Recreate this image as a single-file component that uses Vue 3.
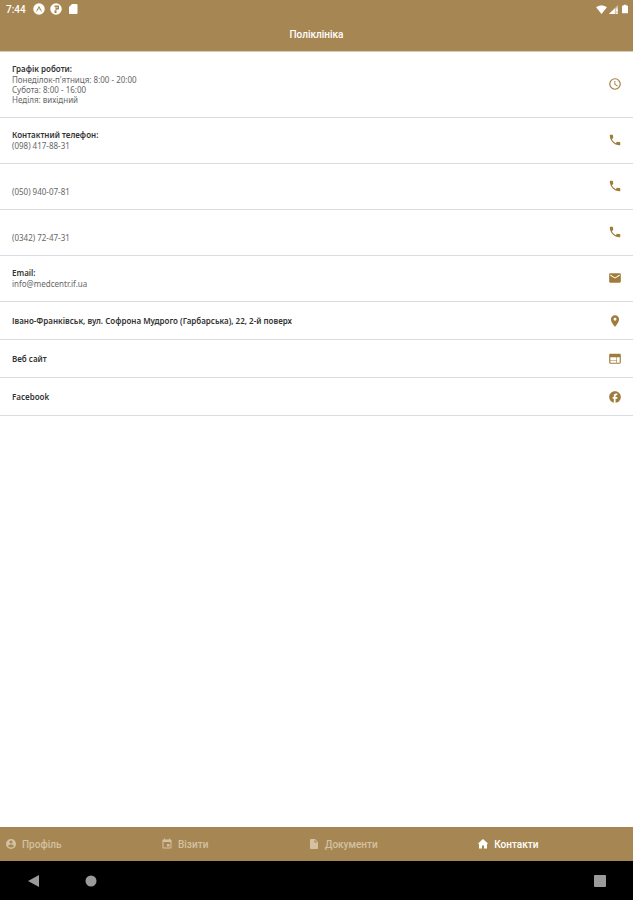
<script setup>
import { ref } from 'vue'

// 24x24 glyphs
const icons = {
  clock: 'M12 2a10 10 0 1 0 0 20 10 10 0 0 0 0-20zm0 18a8 8 0 1 1 0-16 8 8 0 0 1 0 16zm.5-13H11v6l5.2 3.2.8-1.3-4.500-2.700z',
  phone: 'M6.620 10.790c1.440 2.830 3.760 5.140 6.590 6.590l2.200-2.200c.27-.27.67-.36 1.020-.24 1.120.37 2.330.57 3.570.57.55 0 1 .45 1 1V20c0 .55-.45 1-1 1C10.610 21 3 13.390 3 4c0-.55.45-1 1-1h3.500c.55 0 1 .45 1 1 0 1.250.2 2.450.57 3.570.11.35.03.74-.25 1.020z',
  mail: 'M20 4H4c-1.100 0-2 .9-2 2v12c0 1.100.9 2 2 2h16c1.100 0 2-.9 2-2V6c0-1.100-.9-2-2-2zm0 4-8 5-8-5V6l8 5 8-5z',
  pin: 'M12 2C8.130 2 5 5.130 5 9c0 5.250 7 13 7 13s7-7.750 7-13c0-3.870-3.130-7-7-7zm0 9.500a2.500 2.500 0 1 1 0-5 2.500 2.500 0 0 1 0 5z',
  web: 'M20 3H4c-1.100 0-2 .9-2 2v13c0 1.100.9 2 2 2h16c1.100 0 2-.9 2-2V5c0-1.100-.9-2-2-2zM14.500 18.500H4v-4h10.500zm0-5H4V9h10.500zm5.500 5h-4.500V9H20z',
  facebook: 'M22 12c0-5.520-4.480-10-10-10S2 6.480 2 12c0 4.840 3.440 8.870 8 9.800V15H8v-3h2V9.500C10 7.570 11.570 6 13.500 6H16v3h-2c-.55 0-1 .45-1 1v2h3v3h-3v6.950c5.050-.5 9-4.760 9-9.950z',
  user: 'M12 2a10 10 0 1 0 0 20 10 10 0 0 0 0-20zm0 3a3 3 0 1 1 0 6 3 3 0 0 1 0-6zm0 14.200a7.200 7.200 0 0 1-6-3.220c.03-1.990 4-3.080 6-3.080s5.970 1.090 6 3.080a7.200 7.200 0 0 1-6 3.220z',
  calendar: 'M17 12h-5v5h5zM16 1v2H8V1H6v2H5c-1.110 0-2 .9-2 2v14c0 1.100.89 2 2 2h14c1.100 0 2-.9 2-2V5c0-1.100-.9-2-2-2h-1V1zm3 18H5V8h14z',
  file: 'M6 2c-1.100 0-2 .9-2 2v16c0 1.100.89 2 2 2h12c1.100 0 2-.9 2-2V8l-6-6zm7 7V3.500L18.500 9z',
  home: 'M12 2 1.500 11.500H4V21h6v-6h4v6h6v-9.500h2.500z',
}

const contacts = [
  {
    title: 'Графік роботи:',
    lines: ["Понеділок-п'ятниця: 8:00 - 20:00", 'Субота: 8:00 - 16:00', 'Неділя: вихідний'],
    icon: 'clock',
  },
  { title: 'Контактний телефон:', lines: ['(098) 417-88-31'], icon: 'phone', href: 'tel:0984178831' },
  { title: '', lines: ['(050) 940-07-81'], icon: 'phone', href: 'tel:0509400781' },
  { title: '', lines: ['(0342) 72-47-31'], icon: 'phone', href: 'tel:0342724731' },
  { title: 'Email:', lines: ['info@medcentr.if.ua'], icon: 'mail', href: 'mailto:info@medcentr.if.ua' },
  {
    title: 'Івано-Франківськ, вул. Софрона Мудрого (Гарбарська), 22, 2-й поверх',
    lines: [],
    icon: 'pin',
    href: '#map',
  },
  { title: 'Веб сайт', lines: [], icon: 'web', href: '#site' },
  { title: 'Facebook', lines: [], icon: 'facebook', href: '#facebook' },
]

const tabs = [
  { id: 'profile', label: 'Профіль', icon: 'user' },
  { id: 'visits', label: 'Візити', icon: 'calendar' },
  { id: 'docs', label: 'Документи', icon: 'file' },
  { id: 'contacts', label: 'Контакти', icon: 'home' },
]

const activeTab = ref('contacts')
</script>

<template>
  <div class="screen">
    <header class="header">
      <div class="status">
        <span class="status-time">7:44</span>
        <svg class="status-icon" viewBox="0 0 24 24" aria-hidden="true">
          <circle cx="12" cy="12" r="11.500" fill="#fff" />
          <path d="M7 17 12 7l5 10M9.500 13.500 12 11l2.500 2.500" fill="none" stroke="#a68753" stroke-width="1.800" />
        </svg>
        <svg class="status-icon" viewBox="0 0 24 24" aria-hidden="true">
          <circle cx="12" cy="12" r="11.500" fill="#fff" />
          <path d="M9 5h9v8h-5v7H9v-5h2V8H9z" fill="#a68753" />
          <path d="M13 8h2v2h-2z" fill="#fff" />
        </svg>
        <svg class="status-icon" viewBox="0 0 24 24" aria-hidden="true">
          <path d="M10 2h9a2 2 0 0 1 2 2v16a2 2 0 0 1-2 2H6a2 2 0 0 1-2-2V8z" fill="#fff" />
        </svg>
        <div class="status-right">
          <svg class="status-wifi" viewBox="0 0 24 20" aria-hidden="true">
            <path d="M12 20 0 5C7 0 17 0 24 5z" fill="#fff" />
          </svg>
          <svg class="status-signal" viewBox="0 0 20 20" aria-hidden="true">
            <path d="M0 20 20 0v20z" fill="#fff" opacity=".5" />
            <path d="M0 20 13 7v13zM16 8h3v7h-3zM16 17h3v3h-3z" fill="#fff" />
          </svg>
          <svg class="status-battery" viewBox="0 0 14 20" aria-hidden="true">
            <path d="M4 0h6v2h2a2 2 0 0 1 2 2v14a2 2 0 0 1-2 2H2a2 2 0 0 1-2-2V4a2 2 0 0 1 2-2h2z" fill="#fff" />
          </svg>
        </div>
      </div>
      <h1 class="title">Поліклініка</h1>
    </header>

    <main class="list">
      <component
        :is="c.href ? 'a' : 'div'"
        v-for="(c, i) in contacts"
        :key="i"
        :href="c.href"
        class="row"
        :class="{ 'row--single': !c.lines.length }"
      >
        <div class="row-text">
          <div class="row-title">{{ c.title }}</div>
          <div v-for="line in c.lines" :key="line" class="row-line">{{ line }}</div>
        </div>
        <svg class="row-icon" viewBox="0 0 24 24" aria-hidden="true">
          <path :d="icons[c.icon]" fill-rule="evenodd" />
        </svg>
      </component>
    </main>

    <nav class="tabs">
      <button
        v-for="t in tabs"
        :key="t.id"
        type="button"
        class="tab"
        :class="{ 'tab--active': activeTab === t.id }"
        :aria-current="activeTab === t.id ? 'page' : undefined"
        @click="activeTab = t.id"
      >
        <svg class="tab-icon" viewBox="0 0 24 24" aria-hidden="true">
          <path :d="icons[t.icon]" fill-rule="evenodd" />
        </svg>
        {{ t.label }}
      </button>
    </nav>

    <div class="system">
      <button type="button" class="sys-btn" aria-label="Назад">
        <svg viewBox="0 0 12 12" aria-hidden="true"><path d="M0 6 11 0v12z" /></svg>
      </button>
      <button type="button" class="sys-btn" aria-label="Додому">
        <svg viewBox="0 0 12 12" aria-hidden="true"><circle cx="6" cy="6" r="5.500" /></svg>
      </button>
      <button type="button" class="sys-btn sys-btn--recent" aria-label="Останні програми">
        <svg viewBox="0 0 12 12" aria-hidden="true"><rect width="12" height="12" rx="1" /></svg>
      </button>
    </div>
  </div>
</template>

<style>
body {
  margin: 0;
  background: #fff;
}
</style>

<style scoped>
.screen {
  display: flex;
  flex-direction: column;
  min-height: 100vh;
  font-family: Roboto, "Noto Sans", sans-serif;
  background: #fff;
}

.header {
  background: #a68753;
  color: #fff;
  border-bottom: 1px solid #d8cbb6;
}

.status {
  display: flex;
  align-items: center;
  gap: 5px;
  height: 18px;
  padding: 0 5px 0 6px;
}

.status-time {
  font-size: 10px;
  font-weight: 500;
  margin-right: 2px;
}

.status-icon {
  width: 12px;
  height: 12px;
}

.status-right {
  display: flex;
  align-items: center;
  gap: 2px;
  margin-left: auto;
}

.status-wifi { width: 11px; height: 9px; }
.status-signal { width: 9px; height: 9px; }
.status-battery { width: 6px; height: 10px; margin-left: 2px; }

.title {
  margin: 0;
  font-size: 10px;
  font-weight: 500;
  line-height: 33px;
  text-align: center;
}

.list {
  flex: 1;
  font-family: "Noto Sans", Roboto, sans-serif;
  font-size: 8px;
}

.row {
  display: flex;
  align-items: center;
  justify-content: space-between;
  padding: 11px 11px 12px 12px;
  border-bottom: 1px solid #d9dce2;
  color: inherit;
  text-decoration: none;
}

.row--single {
  padding-top: 12px;
  padding-bottom: 11px;
}

.row-title {
  min-height: 12px;
  font-weight: 600;
  line-height: 12px;
  color: #333;
}

.row-line {
  line-height: 10px;
  color: #666;
}

.row-icon {
  flex: none;
  width: 14px;
  height: 14px;
  fill: #a07c3c;
}

.tabs {
  display: flex;
  height: 34px;
  background: #a68753;
}

.tab {
  display: flex;
  flex: 1 1 auto;
  align-items: center;
  gap: 5px;
  padding: 0 0 0 5px;
  border: 0;
  background: none;
  color: #d3c1a1;
  font-family: inherit;
  font-size: 10px;
  font-weight: 500;
  cursor: pointer;
}

.tab--active {
  color: #fff;
}

.tab-icon {
  width: 12px;
  height: 12px;
  fill: currentColor;
}

.system {
  display: flex;
  align-items: center;
  gap: 45px;
  height: 39px;
  padding: 0 27px 0 28px;
  background: #000;
}

.sys-btn {
  display: flex;
  padding: 0;
  border: 0;
  background: none;
  cursor: pointer;
}

.sys-btn svg {
  width: 12px;
  height: 12px;
  fill: #9b9b9b;
}

.sys-btn--recent {
  margin-left: auto;
}
</style>
